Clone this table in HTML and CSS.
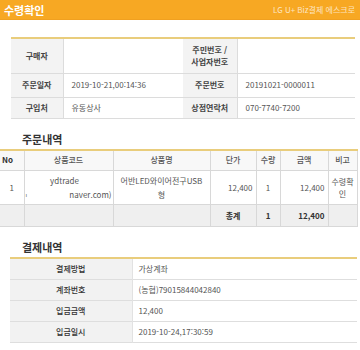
FILE: index.html
```html
<!DOCTYPE html>
<html lang="ko">
<head>
<meta charset="utf-8">
<link rel="stylesheet" href="styles.css">
</head>
<body>
<div class="topbar">
  <span class="title">수령확인</span>
  <span class="brand">LG U+ Biz결제 에스크로</span>
</div>

<table class="info">
  <colgroup><col class="c1"><col class="c2"><col class="c3"><col class="c4"></colgroup>
  <tr class="r1">
    <th>구매자</th><td></td>
    <th>주민번호 /<br>사업자번호</th><td></td>
  </tr>
  <tr class="r2">
    <th>주문일자</th><td>2019-10-21,00:14:36</td>
    <th>주문번호</th><td>20191021-0000011</td>
  </tr>
  <tr class="r3">
    <th>구입처</th><td>유동상사</td>
    <th>상점연락처</th><td>070-7740-7200</td>
  </tr>
</table>

<h2 class="sec sec-order">주문내역</h2>
<table class="order">
  <colgroup>
    <col class="o1"><col class="o2"><col class="o3"><col class="o4"><col class="o5"><col class="o6"><col class="o7">
  </colgroup>
  <tr class="head">
    <th class="no">No</th><th>상품코드</th><th>상품명</th><th>단가</th><th>수량</th><th>금액</th><th>비고</th>
  </tr>
  <tr class="item">
    <td class="ctr">1</td>
    <td class="code"><div class="l1">ydtrade</div><div class="l2"><span class="bar">ı</span><span>naver.com)</span></div></td>
    <td class="name">어반LED와이어전구USB<br>형</td>
    <td class="num">12,400</td>
    <td class="ctr">1</td>
    <td class="num">12,400</td>
    <td class="ctr">수령확<br>인</td>
  </tr>
  <tr class="total">
    <td></td><td></td><td></td>
    <td class="ctr b">총계</td>
    <td class="ctr b">1</td>
    <td class="num b">12,400</td>
    <td></td>
  </tr>
</table>

<h2 class="sec sec-pay">결제내역</h2>
<table class="pay">
  <colgroup><col class="p1"><col class="p2"></colgroup>
  <tr><th>결제방법</th><td>가상계좌</td></tr>
  <tr><th>계좌번호</th><td>(농협)79015844042840</td></tr>
  <tr><th>입금금액</th><td>12,400</td></tr>
  <tr><th>입금일시</th><td>2019-10-24,17:30:59</td></tr>
</table>
</body>
</html>
```

FILE: styles.css
```css
* { box-sizing: border-box; }
html, body { margin: 0; padding: 0; background: #fff; }
body {
  width: 360px;
  font-family: "Noto Sans CJK KR", "Noto Sans", sans-serif;
  color: #444;
  font-size: 8px;
}
.topbar {
  height: 20px;
  background: #f7a823;
  border-bottom: 1px solid #f0a020;
  display: flex;
  justify-content: space-between;
  align-items: center;
  padding: 0 5px 0 4px;
}
.topbar .title { color: #fff; font-weight: 700; font-size: 11px; }
.topbar .brand { color: rgba(255,255,255,0.72); font-size: 8px; }

table { border-collapse: collapse; table-layout: fixed; }
th, td { padding: 0; font-size: 8px; line-height: 12px; }
th { font-weight: 700; color: #444; }

.info { margin: 17px 0 0 11px; width: 344px; border-top: 2px solid #e9cd7c; }
.info .c1 { width: 52px; }
.info .c2 { width: 120px; }
.info .c3 { width: 54px; }
.info .c4 { width: 118px; }
.info tr { border-bottom: 1px solid #dcdcdc; }
.info th { background: #f3f3f3; border-right: 1px solid #dcdcdc; text-align: center; }
.info td { padding-left: 8px; color: #555; }
.info .r1 { height: 35px; }
.info .r2 { height: 24px; }
.info .r3 { height: 21px; }

.sec { margin: 0; font-size: 11px; font-weight: 700; color: #333; line-height: 16px; padding-left: 22px; }
.sec-order { margin-top: 12px; margin-bottom: 2px; }
.sec-pay { margin-top: 12px; margin-bottom: 2px; }

.order { width: 357px; border-top: 2px solid #e9cd7c; }
.order .o1 { width: 24px; }
.order .o2 { width: 89px; }
.order .o3 { width: 97px; }
.order .o4 { width: 46px; }
.order .o5 { width: 24px; }
.order .o6 { width: 48px; }
.order .o7 { width: 29px; }
.order th, .order td { border-right: 1px solid #d8d8d8; border-bottom: 1px solid #d8d8d8; }
.order tr > :last-child { border-right: 1px solid #d8d8d8; }
.order .head { height: 21px; background: #f8f8f8; }
.order .head th { font-weight: 500; color: #555; text-align: center; }
.order .head th.no { font-weight: 700; color: #333; text-align: left; padding-left: 2px; }
.order .item { height: 34px; }
.order .item td { color: #555; }
.order .total { height: 22px; background: #efefef; }
.order .ctr { text-align: center; }
.order .num { text-align: right; padding-right: 3px; }
.order .b { font-weight: 700; color: #333; }
.order .name { text-align: center; line-height: 14px; }
.order .code { line-height: 14px; }
.order .code .l1 { text-align: center; padding-right: 8px; }
.order .code .l2 { display: flex; justify-content: space-between; padding-left: 1px; padding-right: 1px; }
.order .code .bar { font-size: 6px; }

.pay { margin-left: 10px; width: 347px; border-top: 2px solid #e9cd7c; }
.pay .p1 { width: 122px; }
.pay .p2 { width: 225px; }
.pay tr { height: 21px; border-bottom: 1px solid #dedede; }
.pay th { background: #f2f2f2; text-align: center; border-right: 1px solid #e2e2e2; font-weight: 500; color: #333; }
.pay td { padding-left: 6px; color: #555; }
```
